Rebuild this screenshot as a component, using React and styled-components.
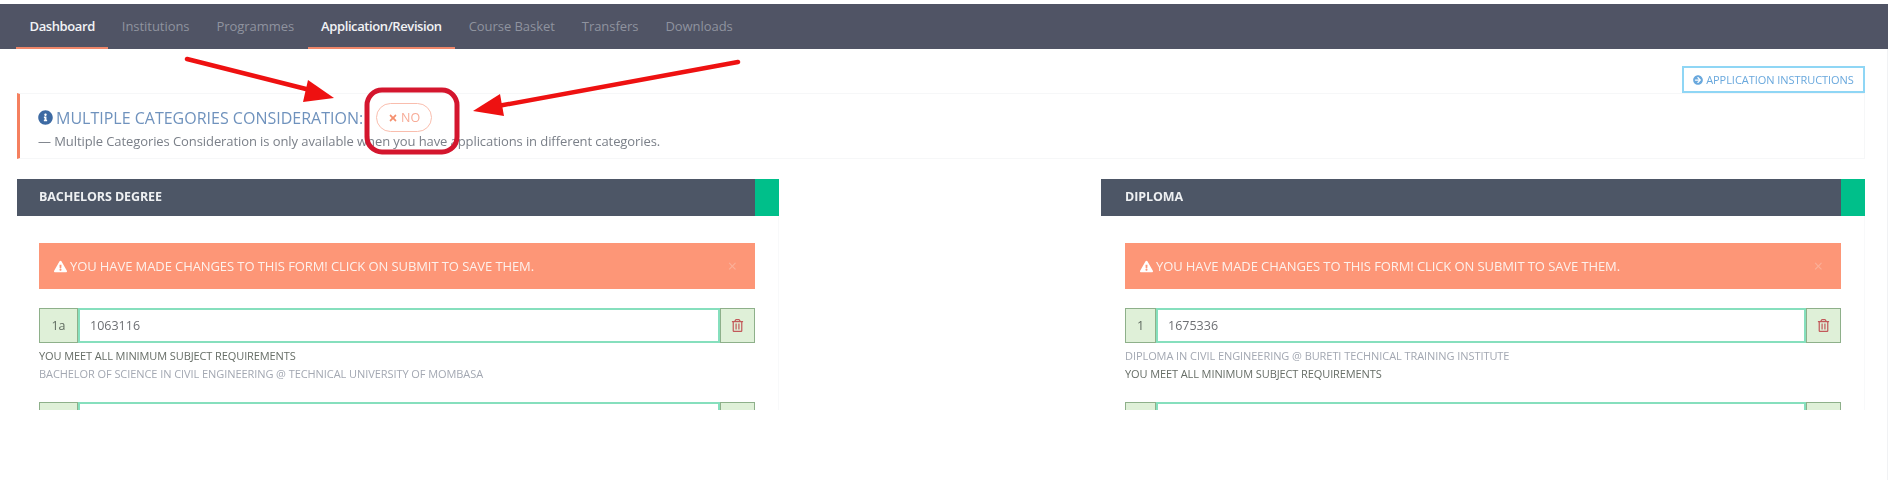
import styled, { createGlobalStyle } from 'styled-components';
import {
    FaInfoCircle,
    FaTimes,
    FaExclamationTriangle,
    FaRegTrashAlt,
    FaArrowCircleRight,
} from 'react-icons/fa';

const GlobalStyle = createGlobalStyle`
    html, body {
        margin: 0;
        padding: 0;
        background: #fff;
        font-family: "Open Sans", "Liberation Sans", sans-serif;
    }
`;

const tabs = [
    { label: 'Dashboard', active: true },
    { label: 'Institutions' },
    { label: 'Programmes' },
    { label: 'Application/Revision', active: true },
    { label: 'Course Basket' },
    { label: 'Transfers' },
    { label: 'Downloads' },
];

const panels = [
    {
        title: 'BACHELORS DEGREE',
        code: '1a',
        value: '1063116',
        course: 'BACHELOR OF SCIENCE IN CIVIL ENGINEERING @ TECHNICAL UNIVERSITY OF MOMBASA',
        courseFirst: false,
        prefixWidth: 39,
        inset: 22,
    },
    {
        title: 'DIPLOMA',
        code: '1',
        value: '1675336',
        course: 'DIPLOMA IN CIVIL ENGINEERING @ BURETI TECHNICAL TRAINING INSTITUTE',
        courseFirst: true,
        prefixWidth: 31,
        inset: 24,
    },
];

const Annotations = () => (
    <Overlay viewBox="0 0 1891 484" aria-hidden="true">
        <rect x="367" y="90" width="90" height="62" rx="15" fill="none" stroke="#d4162e" strokeWidth="5" />
        <path d="M187 59 L310 90" stroke="#ee1111" strokeWidth="4.5" strokeLinecap="round" />
        <path d="M334 98 L308 80 L303 102 Z" fill="#ee1111" />
        <path d="M738 62 L498 106" stroke="#ee1111" strokeWidth="4.5" strokeLinecap="round" />
        <path d="M473 111 L500 94 L504 116 Z" fill="#ee1111" />
    </Overlay>
);

const Panel = ({ panel }) => {
    const meet = <Meets>YOU MEET ALL MINIMUM SUBJECT REQUIREMENTS</Meets>;
    const course = <Course>{panel.course}</Course>;

    return (
        <section>
            <PanelHeader>
                <PanelTitle $inset={panel.inset}>{panel.title}</PanelTitle>
                <PanelAccent />
            </PanelHeader>
            <PanelBody $inset={panel.inset}>
                <Alert>
                    <AlertText>
                        <FaExclamationTriangle />
                        YOU HAVE MADE CHANGES TO THIS FORM! CLICK ON SUBMIT TO SAVE THEM.
                    </AlertText>
                    <AlertClose>×</AlertClose>
                </Alert>
                <InputRow>
                    <Prefix $width={panel.prefixWidth}>{panel.code}</Prefix>
                    <Field>{panel.value}</Field>
                    <Remove><FaRegTrashAlt /></Remove>
                </InputRow>
                <Notes>
                    {panel.courseFirst ? course : meet}
                    {panel.courseFirst ? meet : course}
                </Notes>
                <InputRow>
                    <Prefix $width={panel.prefixWidth} />
                    <Field />
                    <Remove />
                </InputRow>
            </PanelBody>
        </section>
    );
};

const App = () => (
    <Page>
        <GlobalStyle />
        <Nav>
            {tabs.map((tab) => (
                <Tab key={tab.label} $active={tab.active}>{tab.label}</Tab>
            ))}
        </Nav>
        <Main>
            <Toolbar>
                <InstructionsButton>
                    <FaArrowCircleRight />
                    APPLICATION INSTRUCTIONS
                </InstructionsButton>
            </Toolbar>
            <Notice>
                <NoticeHead>
                    <NoticeTitle>
                        <FaInfoCircle />
                        MULTIPLE CATEGORIES CONSIDERATION:
                    </NoticeTitle>
                    <NoPill><FaTimes />NO</NoPill>
                </NoticeHead>
                <NoticeText>
                    — Multiple Categories Consideration is only available when you have applications in different categories.
                </NoticeText>
            </Notice>
            <Columns>
                {panels.map((panel) => (
                    <Panel key={panel.title} panel={panel} />
                ))}
            </Columns>
        </Main>
        <Annotations />
    </Page>
);

const Page = styled.div`
    position: relative;
    width: 1891px;
    height: 484px;
    overflow: hidden;
    padding-top: 4px;
    box-sizing: border-box;
    filter: blur(0.7px);
`;

const Overlay = styled.svg`
    position: absolute;
    inset: 0;
    width: 1891px;
    height: 484px;
    pointer-events: none;
`;

const Nav = styled.nav`
    width: 1888px;
    height: 45px;
    padding-left: 16px;
    box-sizing: border-box;
    background: #505465;
    display: flex;
`;

const Tab = styled.a`
    padding: 0 13.5px;
    display: flex;
    align-items: center;
    font-size: 13px;
    letter-spacing: ${(p) => (p.$active ? '-0.4px' : '-0.05px')};
    font-weight: ${(p) => (p.$active ? 600 : 400)};
    color: ${(p) => (p.$active ? '#f2f3f5' : '#8f939f')};
    border-bottom: 2px solid ${(p) => (p.$active ? '#f0876a' : 'transparent')};
`;

const Main = styled.main`
    width: 1888px;
    height: 431px;
    padding: 17px 22px 0 17px;
    box-sizing: border-box;
    border-right: 1px solid #f1f2f4;
`;

const Toolbar = styled.div`
    display: flex;
    justify-content: flex-end;
`;

const InstructionsButton = styled.div`
    width: 183px;
    height: 27px;
    box-sizing: border-box;
    border: 2px solid #8fd6f5;
    display: flex;
    align-items: center;
    justify-content: center;
    gap: 3px;
    font-size: 11px;
    letter-spacing: -0.05px;
    color: #69a8dd;
    svg { font-size: 10px; }
`;

const Notice = styled.div`
    height: 66px;
    box-sizing: border-box;
    padding: 9px 0 0 18px;
    border: 1px solid #f6f7f8;
    border-left: 3px solid #f5805f;
`;

const NoticeHead = styled.div`
    display: flex;
    align-items: center;
    gap: 13px;
`;

const NoticeTitle = styled.div`
    display: flex;
    align-items: center;
    gap: 3px;
    font-size: 16px;
    color: #6f92bd;
    svg { color: #3d6aa3; font-size: 15px; }
`;

const NoPill = styled.div`
    flex: none;
    width: 56px;
    height: 29px;
    box-sizing: border-box;
    border: 1px solid #f9bdad;
    border-radius: 15px;
    display: flex;
    align-items: center;
    justify-content: center;
    gap: 3px;
    font-size: 12.5px;
    color: #f7ab97;
    svg { font-size: 10px; color: #f5906f; }
`;

const NoticeText = styled.div`
    font-size: 13px;
    letter-spacing: -0.085px;
    color: #7b8089;
`;

const Columns = styled.div`
    margin-top: 20px;
    display: grid;
    grid-template-columns: 762px 764px;
    justify-content: space-between;
`;

const PanelHeader = styled.header`
    height: 37px;
    background: #4d5666;
    display: flex;
    justify-content: space-between;
    align-items: stretch;
`;

const PanelTitle = styled.h3`
    margin: 0;
    padding: 0 0 3px ${(p) => p.$inset}px;
    display: flex;
    align-items: center;
    font-size: 12.5px;
    font-weight: 700;
    letter-spacing: -0.1px;
    color: #eef0f2;
`;

const PanelAccent = styled.div`
    width: 24px;
    background: #00bf8a;
`;

const PanelBody = styled.div`
    height: 194px;
    overflow: hidden;
    box-sizing: border-box;
    padding: 27px 23px 0 ${(p) => p.$inset}px;
    border-right: 1px solid #f8f9fa;
`;

const Alert = styled.div`
    height: 46px;
    padding: 0 18px 0 15px;
    background: #fd9677;
    display: flex;
    justify-content: space-between;
    align-items: center;
`;

const AlertText = styled.div`
    display: flex;
    align-items: center;
    gap: 3px;
    font-size: 13px;
    letter-spacing: -0.09px;
    color: #fdf1ec;
    svg { font-size: 13px; color: #fff; }
`;

const AlertClose = styled.span`
    font-size: 16px;
    color: #fbaf98;
`;

const InputRow = styled.div`
    margin-top: 19px;
    height: 35px;
    display: flex;
    box-sizing: border-box;
`;

const Prefix = styled.div`
    width: ${(p) => p.$width}px;
    box-sizing: border-box;
    border: 1px solid #8eb08a;
    background: #dff0d8;
    display: flex;
    align-items: center;
    justify-content: center;
    font-size: 12.5px;
    color: #5f6b60;
`;

const Field = styled.div`
    flex: 1;
    box-sizing: border-box;
    border: 2px solid #86dfbd;
    padding-left: 10px;
    display: flex;
    align-items: center;
    font-size: 12.5px;
    color: #6d6f73;
`;

const Remove = styled.div`
    width: 35px;
    box-sizing: border-box;
    border: 1px solid #8eb08a;
    background: #dff0d8;
    display: flex;
    align-items: center;
    justify-content: center;
    font-size: 13px;
    color: #c2595a;
`;

const Notes = styled.div`
    margin-top: 4px;
    margin-bottom: -14px;
    height: 50px;
`;

const Meets = styled.div`
    height: 18px;
    line-height: 18px;
    font-size: 11px;
    letter-spacing: -0.1px;
    color: #666d66;
`;

const Course = styled.div`
    height: 18px;
    line-height: 18px;
    font-size: 11px;
    letter-spacing: -0.07px;
    color: #a3a8b2;
`;

export default App;
